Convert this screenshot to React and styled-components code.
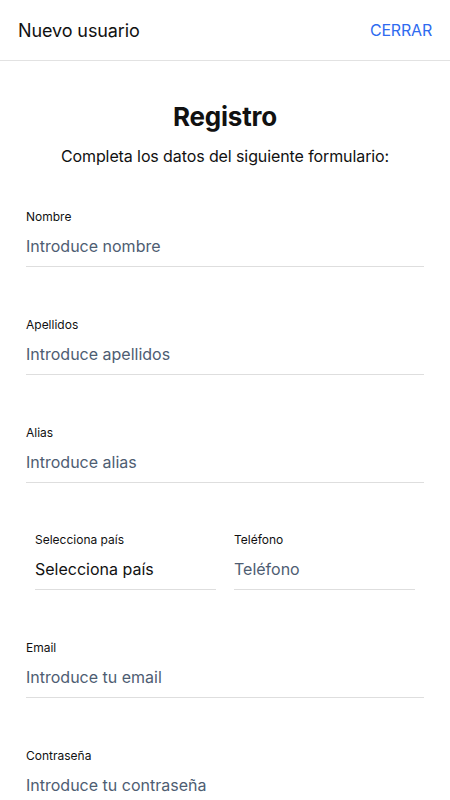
import React from "react";
import styled, { createGlobalStyle } from "styled-components";

const GlobalStyle = createGlobalStyle`
  * { box-sizing: border-box; }
  body {
    margin: 0;
    background: #fff;
    font-family: Inter, "Noto Sans", sans-serif;
    color: #111;
  }
`;

const Page = styled.div`
  width: 100%;
  min-height: 100vh;
  background: #fff;
`;

const TopBar = styled.header`
  height: 61px;
  display: flex;
  align-items: center;
  justify-content: space-between;
  padding: 0 18px;
  border-bottom: 1px solid #e2e2e2;
`;

const TopTitle = styled.h1`
  margin: 0;
  font-size: 18px;
  font-weight: 400;
  letter-spacing: -0.1px;
  color: #111;
`;

const CloseButton = styled.button`
  border: 0;
  background: none;
  padding: 0;
  font-family: inherit;
  font-size: 16px;
  letter-spacing: -0.2px;
  color: #2f6bf0;
  cursor: pointer;
`;

const Form = styled.form`
  padding: 40px 26px 0;
`;

const Heading = styled.h2`
  margin: 0;
  text-align: center;
  font-size: 26px;
  line-height: 32px;
  font-weight: 700;
  letter-spacing: -0.2px;
  color: #111;
`;

const Subheading = styled.p`
  margin: 13px 0 43px;
  text-align: center;
  font-size: 16px;
  line-height: 20px;
  letter-spacing: -0.1px;
  color: #111;
`;

const Field = styled.label`
  display: flex;
  flex-direction: column;
  flex: 1 1 0;
  min-width: 0;
  margin-bottom: ${(p) => (p.$last ? 0 : "50px")};
`;

const LabelText = styled.span`
  font-size: 12px;
  line-height: 16px;
  color: #111;
`;

const Input = styled.input`
  width: 100%;
  height: 42px;
  border: 0;
  border-bottom: 1px solid #dedede;
  padding: 0;
  font-family: inherit;
  font-size: 16px;
  color: #111;
  background: transparent;
  outline: none;
  &::placeholder {
    color: #4e5d72;
  }
`;

const FakeSelect = styled.div`
  height: 42px;
  display: flex;
  align-items: center;
  border-bottom: 1px solid #dedede;
  font-size: 16px;
  color: #111;
  white-space: nowrap;
`;

const Row = styled.div`
  display: flex;
  gap: 18px;
  padding: 0 9px;
  margin: -1px 0 50px;
`;

export default function App() {
  return (
    <Page>
      <GlobalStyle />
      <TopBar>
        <TopTitle>Nuevo usuario</TopTitle>
        <CloseButton type="button">CERRAR</CloseButton>
      </TopBar>
      <Form>
        <Heading>Registro</Heading>
        <Subheading>Completa los datos del siguiente formulario:</Subheading>

        <Field>
          <LabelText>Nombre</LabelText>
          <Input placeholder="Introduce nombre" />
        </Field>
        <Field>
          <LabelText>Apellidos</LabelText>
          <Input placeholder="Introduce apellidos" />
        </Field>
        <Field>
          <LabelText>Alias</LabelText>
          <Input placeholder="Introduce alias" />
        </Field>

        <Row>
          <Field $last>
            <LabelText>Selecciona país</LabelText>
            <FakeSelect>Selecciona país</FakeSelect>
          </Field>
          <Field $last>
            <LabelText>Teléfono</LabelText>
            <Input placeholder="Teléfono" />
          </Field>
        </Row>

        <Field>
          <LabelText>Email</LabelText>
          <Input type="email" placeholder="Introduce tu email" />
        </Field>
        <Field>
          <LabelText>Contraseña</LabelText>
          <Input type="password" placeholder="Introduce tu contraseña" />
        </Field>
      </Form>
    </Page>
  );
}
